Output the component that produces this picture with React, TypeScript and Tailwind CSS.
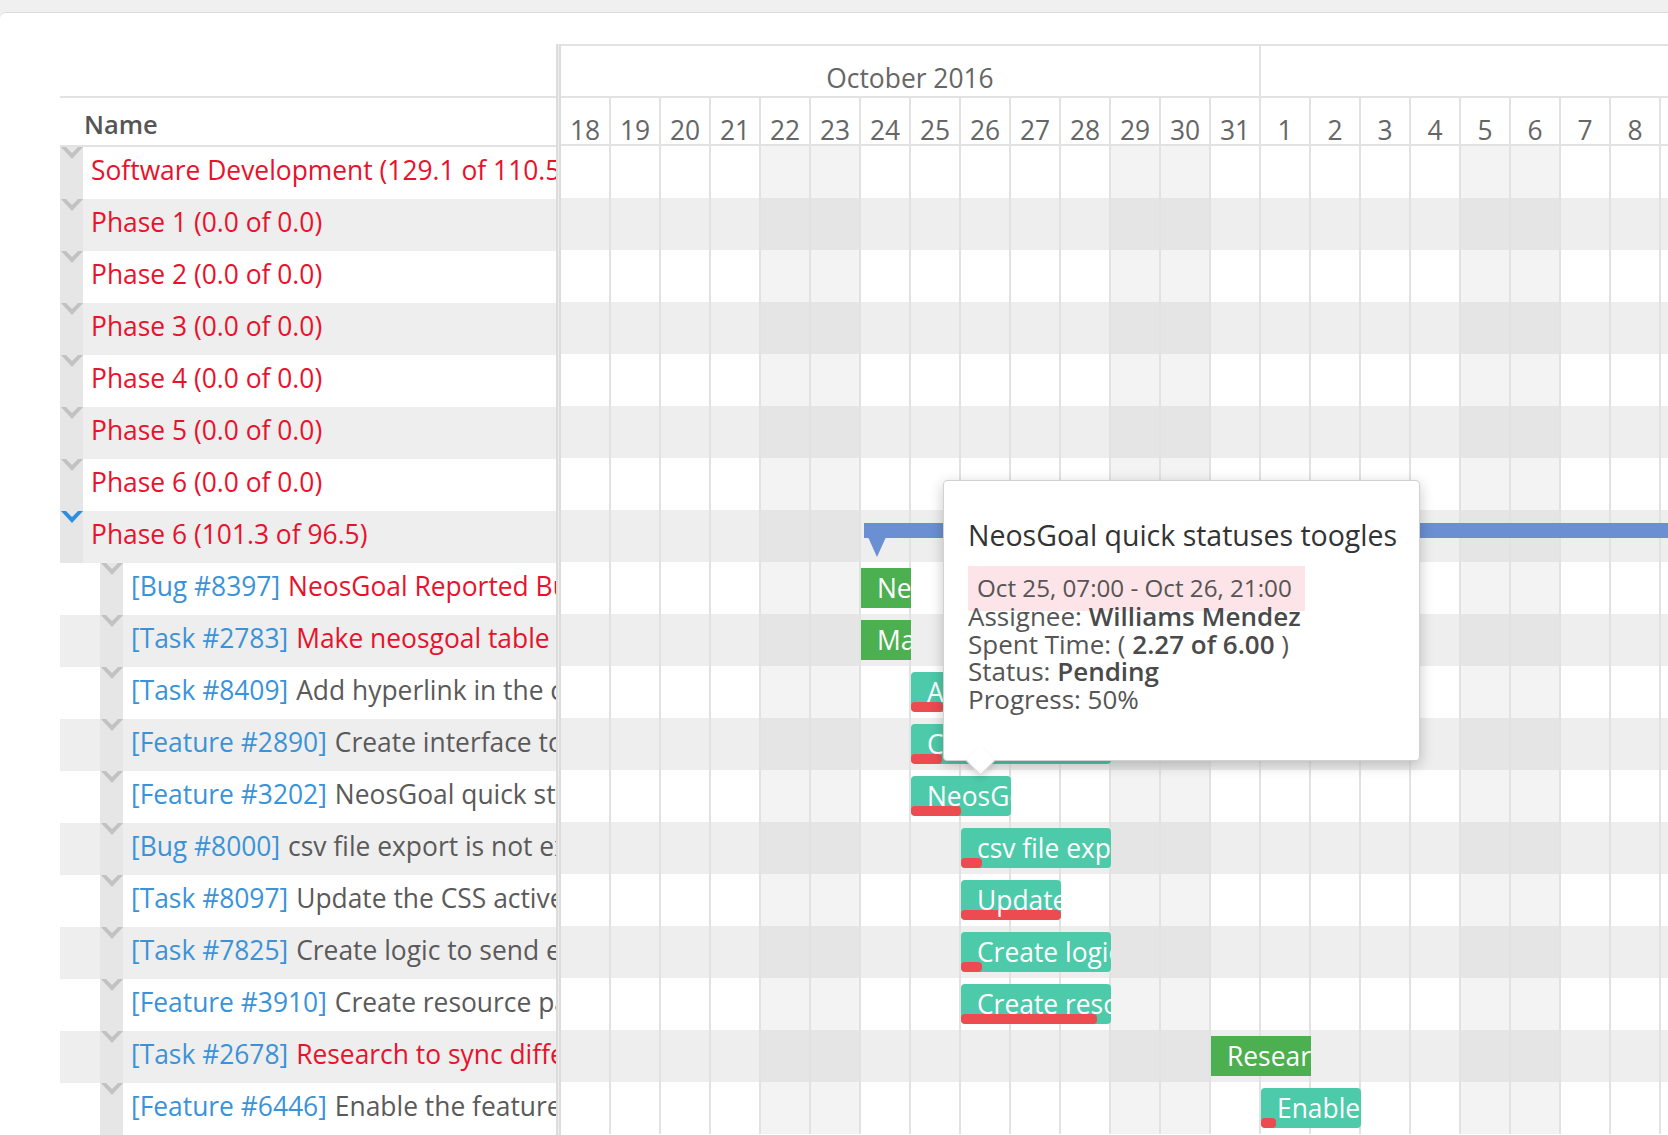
import React from "react";

type Bar = {
  kind: "green" | "teal";
  left: number;
  width: number;
  label: string;
  progress?: number;
};

type Row = {
  level: 0 | 1;
  id?: string;
  title: string;
  red: boolean;
  expanded?: boolean;
  bar?: Bar;
  summary?: boolean;
};

const days = [18, 19, 20, 21, 22, 23, 24, 25, 26, 27, 28, 29, 30, 31, 1, 2, 3, 4, 5, 6, 7, 8, 9];
const weekend = new Set([4, 5, 11, 12, 18, 19]);

const rows: Row[] = [
  { level: 0, title: "Software Development (129.1 of 110.5)", red: true },
  { level: 0, title: "Phase 1 (0.0 of 0.0)", red: true },
  { level: 0, title: "Phase 2 (0.0 of 0.0)", red: true },
  { level: 0, title: "Phase 3 (0.0 of 0.0)", red: true },
  { level: 0, title: "Phase 4 (0.0 of 0.0)", red: true },
  { level: 0, title: "Phase 5 (0.0 of 0.0)", red: true },
  { level: 0, title: "Phase 6 (0.0 of 0.0)", red: true },
  { level: 0, title: "Phase 6 (101.3 of 96.5)", red: true, expanded: true, summary: true },
  { level: 1, id: "[Bug #8397]", title: "NeosGoal Reported Bugs", red: true, bar: { kind: "green", left: 300, width: 50, label: "NeosGoal Reported Bugs" } },
  { level: 1, id: "[Task #2783]", title: "Make neosgoal table responsive", red: true, bar: { kind: "green", left: 300, width: 50, label: "Make neosgoal table" } },
  { level: 1, id: "[Task #8409]", title: "Add hyperlink in the calendar", red: false, bar: { kind: "teal", left: 350, width: 100, label: "Add hyperlink", progress: 32 } },
  { level: 1, id: "[Feature #2890]", title: "Create interface to manage", red: false, bar: { kind: "teal", left: 350, width: 200, label: "Create interface", progress: 31 } },
  { level: 1, id: "[Feature #3202]", title: "NeosGoal quick statuses toogles", red: false, bar: { kind: "teal", left: 350, width: 100, label: "NeosGoal quick statuses toogles", progress: 50 } },
  { level: 1, id: "[Bug #8000]", title: "csv file export is not exporting", red: false, bar: { kind: "teal", left: 400, width: 150, label: "csv file export", progress: 21 } },
  { level: 1, id: "[Task #8097]", title: "Update the CSS active state", red: false, bar: { kind: "teal", left: 400, width: 100, label: "Update the CSS", progress: 100 } },
  { level: 1, id: "[Task #7825]", title: "Create logic to send emails", red: false, bar: { kind: "teal", left: 400, width: 150, label: "Create logic to send", progress: 21 } },
  { level: 1, id: "[Feature #3910]", title: "Create resource page", red: false, bar: { kind: "teal", left: 400, width: 150, label: "Create resource page", progress: 136 } },
  { level: 1, id: "[Task #2678]", title: "Research to sync different calendars", red: true, bar: { kind: "green", left: 650, width: 100, label: "Research to sync" } },
  { level: 1, id: "[Feature #6446]", title: "Enable the feature to export", red: false, bar: { kind: "teal", left: 700, width: 100, label: "Enable the feature", progress: 15 } },
];

function Chevron({ blue }: { blue?: boolean }) {
  return (
    <svg width="22" height="13" viewBox="0 0 22 13" className="block">
      <polygon points="0,0 5,0 11,6 17,0 22,0 11,12" fill={blue ? "#2a8fe0" : "#c2c2c2"} />
    </svg>
  );
}

export default function App() {
  return (
    <div
      className="relative w-[1668px] h-[1135px] overflow-hidden bg-[#f0f0f0]"
      style={{ fontFamily: "'Open Sans', 'Noto Sans', sans-serif" }}
    >
      <div className="h-[12px]" />
      <div className="flex h-[1123px] bg-white border-t border-[#dadada] rounded-tl-[6px]">
        {/* Left pane */}
        <div className="w-[556px] shrink-0 overflow-hidden pl-[60px]">
          <div className="h-[83px]" />
          <div className="h-[51px] border-t-2 border-b-2 border-[#e2e2e2] flex items-center pl-[24px] pt-[6px] text-[25.5px] font-semibold text-[#555]">
            Name
          </div>
          {rows.map((r, i) => (
            <div
              key={i}
              className={`h-[52px] flex ${i % 2 === 1 ? "bg-[#eeeeee]" : "bg-white"} ${r.level === 1 ? "pl-[40px]" : ""}`}
            >
              <div className="w-[23px] shrink-0 bg-[#e6e6e6] flex flex-col items-center">
                <Chevron blue={r.expanded} />
              </div>
              <div className="flex-1 pl-[8px] pb-[4px] flex items-center whitespace-nowrap overflow-hidden text-[26.4px]">
                {r.id && <span className="text-[#3a93d9] mr-[8px]">{r.id}</span>}
                <span className={r.red ? "text-[#e8122c]" : "text-[#5a5a5a]"}>{r.title}</span>
              </div>
            </div>
          ))}
        </div>

        {/* Separator */}
        <div className="w-[5px] shrink-0 mt-[31px] bg-[#efefef] border-x-2 border-[#dcdcdc]" />

        {/* Right pane */}
        <div className="flex-1 overflow-hidden">
          <div className="h-[31px]" />
          <div className="w-[1150px]">
            <div className="flex h-[52px] border-t-2 border-[#e2e2e2]">
              <div className="w-[700px] shrink-0 border-r-2 border-[#e2e2e2] flex items-center justify-center pt-[16px] text-[26.4px] text-[#666]">
                October 2016
              </div>
              <div className="flex-1" />
            </div>
            <div className="flex h-[50px] border-t-2 border-b-2 border-[#e2e2e2]">
              {days.map((d, i) => (
                <div
                  key={i}
                  className="w-[50px] shrink-0 border-r-2 border-[#e2e2e2] flex items-center justify-center pt-[20px] text-[26.4px] text-[#666]"
                >
                  {d}
                </div>
              ))}
            </div>
            {rows.map((r, i) => {
              const grey = i % 2 === 1;
              return (
                <div key={i} className={`relative h-[52px] flex ${grey ? "bg-[#eeeeee]" : "bg-white"}`}>
                  {days.map((_, c) => (
                    <div
                      key={c}
                      className={`w-[50px] shrink-0 border-r-2 border-[#e2e2e2] ${
                        weekend.has(c) ? (grey ? "bg-[#e5e5e5]" : "bg-[#f3f3f3]") : ""
                      }`}
                    />
                  ))}
                  {r.summary && (
                    <div className="absolute left-[303px] top-[13px] w-[900px] h-[15px] bg-[#6a8fd3]">
                      <svg width="20" height="21" viewBox="0 0 20 21" className="absolute left-[3px] top-[14px]">
                        <polygon points="1,0 19,0 10,20" fill="#6a8fd3" />
                      </svg>
                    </div>
                  )}
                  {r.bar && (
                    <div
                      className={`absolute top-[6px] h-[40px] overflow-hidden whitespace-nowrap text-white text-[26.4px] leading-[40px] pl-[16px] ${
                        r.bar.kind === "green" ? "bg-[#4caf50]" : "bg-[#4ccaa9] rounded-[4px]"
                      }`}
                      style={{ left: r.bar.left, width: r.bar.width }}
                    >
                      {r.bar.progress !== undefined && (
                        <div
                          className="absolute left-0 bottom-0 h-[10px] rounded-[4px] bg-[#ec4b50]"
                          style={{ width: r.bar.progress }}
                        />
                      )}
                      <span className="relative">{r.bar.label}</span>
                    </div>
                  )}
                </div>
              );
            })}
          </div>
        </div>
      </div>

      {/* Tooltip */}
      <div className="absolute left-[943px] top-[480px] w-[477px] h-[281px] bg-white border border-[#d2d2d2] rounded-[4px] shadow-[0_4px_14px_rgba(0,0,0,0.22)]">
        <div className="absolute left-[26px] bottom-[-11px] w-[21px] h-[21px] rotate-45 bg-white border-r border-b border-[#d2d2d2] shadow-[3px_3px_6px_rgba(0,0,0,0.12)]" />
        <div className="relative pt-[36px] pl-[24px] pr-[10px]">
          <div className="text-[28.5px] leading-[36px] text-[#333] whitespace-nowrap">NeosGoal quick statuses toogles</div>
          <div className="mt-[13px] w-[337px] h-[45px] bg-[#fde4e8] pl-[9px] text-[24.2px] leading-[43px] text-[#555] whitespace-nowrap">
            Oct 25, 07:00 - Oct 26, 21:00
          </div>
          <div className="-mt-[8px] text-[26px] leading-[27.5px] text-[#555] whitespace-nowrap">
            <div>
              Assignee: <span className="font-semibold text-[#4a4a4a]">Williams Mendez</span>
            </div>
            <div>
              Spent Time: ( <span className="font-semibold text-[#4a4a4a]">2.27 of 6.00</span> )
            </div>
            <div>
              Status: <span className="font-semibold text-[#4a4a4a]">Pending</span>
            </div>
            <div>Progress: 50%</div>
          </div>
        </div>
      </div>
    </div>
  );
}
